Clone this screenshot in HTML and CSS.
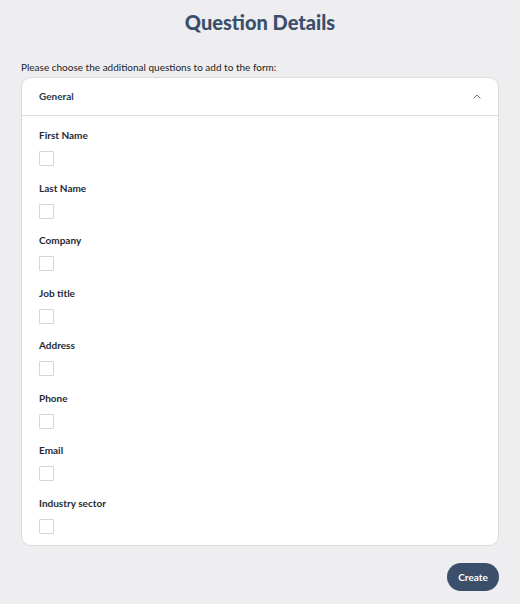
FILE: index.html
```html
<!DOCTYPE html>
<html lang="en">
<head>
  <meta charset="UTF-8" />
  <meta name="viewport" content="width=device-width, initial-scale=1.0"/>
  <title>Question Details</title>
  <link rel="stylesheet" href="styles.css">
</head>
<body>
  <div class="details">
    <h1 class="details-title">Question Details</h1>
    <p class="details-hint">Please choose the additional questions to add to the form:</p>

    <!-- Accordion section with the optional questions -->
    <div class="section">
      <div class="section-head">
        <span>General</span>
        <svg class="chevron" width="8" height="5" viewBox="0 0 8 5"><path d="M0.6 4.4 L4 1 L7.4 4.4" fill="none" stroke="#66758b" stroke-width="1"/></svg>
      </div>
      <div class="section-body">
        <label class="question"><span>First Name</span><input type="checkbox"></label>
        <label class="question"><span>Last Name</span><input type="checkbox"></label>
        <label class="question"><span>Company</span><input type="checkbox"></label>
        <label class="question"><span>Job title</span><input type="checkbox"></label>
        <label class="question"><span>Address</span><input type="checkbox"></label>
        <label class="question"><span>Phone</span><input type="checkbox"></label>
        <label class="question"><span>Email</span><input type="checkbox"></label>
        <label class="question"><span>Industry sector</span><input type="checkbox"></label>
      </div>
    </div>

    <div class="actions">
      <button class="create-btn">Create</button>
    </div>
  </div>
</body>
</html>
```

FILE: styles.css
```css
body {
  margin: 0;
  background: #eeeef0;
  font-family: Lato, 'Noto Sans', sans-serif;
  color: #1f2a37;
}
.details { padding: 0 21px 0 21px; }
.details-title {
  margin: 0;
  padding-top: 10px;
  text-align: center;
  font-size: 20px;
  line-height: 24px;
  font-weight: 900;
  color: #3b4f6b;
}
.details-hint {
  margin: 27px 0 3px;
  font-size: 10px;
  line-height: 13px;
  color: #222;
}
/* Card */
.section {
  background: #fff;
  border: 1px solid #dcdcdf;
  border-radius: 10px;
}
.section-head {
  height: 37px;
  padding: 0 17px 0 17px;
  display: flex;
  align-items: center;
  justify-content: space-between;
  border-bottom: 1px solid #dcdcdf;
  font-size: 10px;
  font-weight: 700;
  color: #2b3a4f;
}
.section-head span { margin-top: -2px; }
.chevron { margin-top: -1px; }
.section-body { padding: 13px 17px 11px; }
.question {
  display: flex;
  flex-direction: column;
  align-items: flex-start;
  font-size: 10px;
  line-height: 12px;
  font-weight: 700;
  color: #1f2a37;
}
.question + .question { margin-top: 15.5px; }
.question input {
  appearance: none;
  margin: 10px 0 0;
  width: 15px;
  height: 15px;
  border: 1px solid #d6d6d4;
  border-radius: 1px;
  background: #fff;
  cursor: pointer;
}
.question input:checked { background: #3b4f6b; border-color: #3b4f6b; }
.actions {
  display: flex;
  justify-content: flex-end;
  padding-top: 17px;
}
.create-btn {
  font-family: Lato, 'Noto Sans', sans-serif;
  font-size: 10px;
  font-weight: 700;
  color: #fff;
  background: #3b4f6b;
  border: none;
  border-radius: 14px;
  width: 52px;
  height: 28px;
  cursor: pointer;
}
```
